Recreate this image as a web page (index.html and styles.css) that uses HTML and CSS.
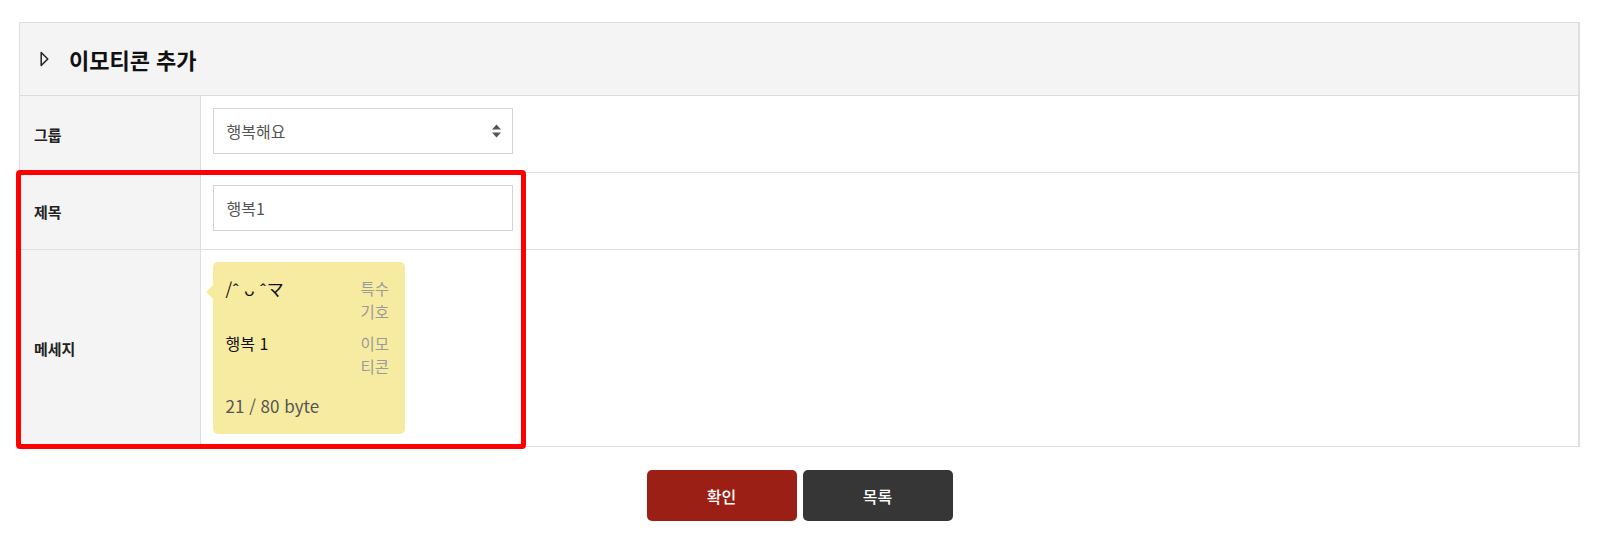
FILE: index.html
```html
<!DOCTYPE html>
<html lang="ko">

<head>
  <meta charset="UTF-8">
  <meta name="viewport" content="width=device-width, initial-scale=1.0">
  <title>이모티콘 추가</title>

  <link rel="stylesheet" href="styles.css">
</head>

<body>
  <div class="page">
    <div class="board">
      <div class="board-head">
        <svg class="tri" width="9" height="16" viewBox="0 0 9 16">
          <path d="M1.2 1.5 L7.8 8 L1.2 14.5 Z" fill="none" stroke="#222" stroke-width="1.5" stroke-linejoin="round" />
        </svg>
        <h2>이모티콘 추가</h2>
      </div>

      <table class="form">
        <tr>
          <th>그룹</th>
          <td class="short">
            <div class="select">
              <span>행복해요</span>
              <svg width="11" height="16" viewBox="0 0 11 16">
                <path d="M5.5 1.5 L10 6.5 L1 6.5 Z" fill="#555" />
                <path d="M5.5 14.5 L10 9.5 L1 9.5 Z" fill="#555" />
              </svg>
            </div>
          </td>
        </tr>
        <tr>
          <th>제목</th>
          <td class="short">
            <div class="input">행복1</div>
          </td>
        </tr>
        <tr>
          <th>메세지</th>
          <td class="tall">
            <div class="memo">
              <div class="memo-row">
                <div class="memo-text emo">/ˆ ᴗ ˆマ</div>
                <div class="memo-btn">특수 기호</div>
              </div>
              <div class="memo-row second">
                <div class="memo-text">행복 1</div>
                <div class="memo-btn">이모 티콘</div>
              </div>
              <div class="memo-count">21 / 80 byte</div>
            </div>
          </td>
        </tr>
      </table>
    </div>

    <div class="btns">
      <button class="btn ok">확인</button>
      <button class="btn list">목록</button>
    </div>

    <div class="mark"></div>
  </div>
</body>

</html>
```

FILE: styles.css
```css
* {
  padding: 0;
  margin: 0;
  box-sizing: border-box;
  font-family: "Noto Sans CJK KR", "Noto Sans", sans-serif;
}

body {
  background-color: white;
}

.page {
  position: relative;
  padding: 22px 20px 0 19px;
}

.board {
  border: 1px solid #dedede;
  border-right-width: 2px;
}

.board-head {
  display: flex;
  align-items: center;
  height: 73px;
  padding-left: 20px;
  background-color: #f4f4f4;
  border-bottom: 1px solid #dcdcdc;
}

.board-head .tri {
  margin-right: 20px;
}

.board-head h2 {
  font-size: 22px;
  font-weight: bold;
  color: #111;
  line-height: 1;
}

.form {
  width: 100%;
  border-collapse: collapse;
}

.form tr + tr th,
.form tr + tr td {
  border-top: 1px solid #dedede;
}

.form th {
  width: 180px;
  padding-left: 14px;
  background-color: #f4f4f4;
  border-right: 1px solid #dedede;
  font-size: 15px;
  font-weight: bold;
  color: #222;
  text-align: left;
}

.form td.short {
  height: 76px;
  padding: 12px 12px 18px 12px;
}

.form td.tall {
  padding: 12px 12px 12px 12px;
}

.select,
.input {
  display: flex;
  align-items: center;
  justify-content: space-between;
  width: 300px;
  height: 46px;
  padding: 0 10px 0 13px;
  border: 1px solid #d4d4d4;
  font-size: 16px;
  color: #555;
}

.memo {
  position: relative;
  width: 192px;
  height: 172px;
  padding: 15px 13px 0 13px;
  background-color: #f7eba1;
  border-radius: 5px;
}

.memo::before {
  content: "";
  position: absolute;
  left: -7px;
  top: 23px;
  border-top: 7px solid transparent;
  border-bottom: 7px solid transparent;
  border-right: 7px solid #f7eba1;
}

.memo-row {
  display: flex;
  justify-content: space-between;
}

.memo-row.second {
  margin-top: 9px;
}

.memo-text {
  font-size: 16px;
  line-height: 23px;
  color: #111;
}

.memo-text.emo {
  font-size: 17px;
}

.memo-btn {
  width: 31px;
  font-size: 15.5px;
  line-height: 23px;
  color: #9b9b9b;
}

.memo-count {
  margin-top: 17px;
  font-size: 17px;
  line-height: 22px;
  color: #555;
}

.btns {
  display: flex;
  justify-content: center;
  gap: 6px;
  margin-top: 23px;
}

.btn {
  width: 150px;
  height: 51px;
  border: none;
  border-radius: 5px;
  font-size: 16px;
  font-weight: 500;
  color: white;
}

.btn.ok {
  background-color: #9c1f15;
}

.btn.list {
  background-color: #363636;
}

.mark {
  position: absolute;
  left: 16px;
  top: 170px;
  width: 510px;
  height: 279px;
  border: 5px solid #ff0000;
  border-radius: 4px;
}
```
